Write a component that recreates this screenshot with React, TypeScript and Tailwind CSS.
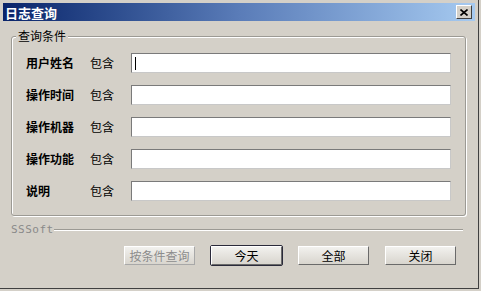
const rows = ["用户姓名", "操作时间", "操作机器", "操作功能", "说明"];

const font = { fontFamily: '"SimSun", "Noto Sans CJK SC", sans-serif' };

function Btn({ label, primary, disabled }: { label: string; primary?: boolean; disabled?: boolean }) {
  return (
    <div className={primary ? "border border-[#2a2a3a] rounded-[2px]" : "border border-transparent"}>
      <div
        className={
          "w-[71px] h-[19px] flex items-center justify-center text-[12px] border border-t-white border-l-white border-b-[#6a6a6a] border-r-[#6a6a6a] bg-gradient-to-b from-[#f2f1ee] to-[#d8d5ce] " +
          (disabled ? "text-[#8c8c8c] from-[#dcd9d2] to-[#d4d0c8] border-b-[#a8a8a8] border-r-[#a8a8a8]" : "text-black")
        }
      >
        {label}
      </div>
    </div>
  );
}

export default function App() {
  return (
    <div className="w-[481px] h-[291px] bg-[#d4d0c8] text-black" style={font}>
      <div className="w-[479px] h-[289px] flex flex-col border-r border-b border-[#404040] px-[3px] pt-[3px]">
        {/* Title bar */}
        <div className="h-[18px] flex items-center justify-between bg-gradient-to-r from-[#0a246a] via-[#5a7cb8] to-[#a6caf0] pl-[2px] pr-[3px]">
          <span className="text-white font-bold text-[13px] leading-none">日志查询</span>
          <div className="w-[16px] h-[14px] bg-[#d4d0c8] border border-t-white border-l-white border-b-[#404040] border-r-[#404040] flex items-center justify-center">
            <svg width="8" height="7" viewBox="0 0 8 7">
              <path d="M0.5 0.5 L7.5 6.5 M7.5 0.5 L0.5 6.5" stroke="#000" strokeWidth="1.6" />
            </svg>
          </div>
        </div>

        {/* Query criteria group */}
        <div className="mt-[15px] ml-[8px] mr-[9px] relative border border-[#9c9a94] rounded-[3px] shadow-[inset_1px_1px_0_#ffffff,1px_1px_0_#ffffff] h-[180px]">
          <span className="absolute -top-[8px] left-[4px] px-[2px] bg-[#d4d0c8] text-[12px] leading-[14px]">查询条件</span>
          <div className="flex flex-col gap-[12px] pt-[16px] pl-[14px] pr-[14px]">
            {rows.map((r, i) => (
              <div key={r} className="flex items-center h-[20px]">
                <span className="w-[64px] font-bold text-[12px]">{r}</span>
                <span className="w-[41px] text-[12px]">包含</span>
                <div className="flex-1 h-[20px] bg-white border border-t-[#7a7a7a] border-l-[#7a7a7a] border-b-[#c8c8c8] border-r-[#c8c8c8] flex items-center pl-[3px]">
                  {i === 0 && <div className="w-px h-[13px] bg-black" />}
                </div>
              </div>
            ))}
          </div>
        </div>

        {/* SSSoft separator */}
        <div className="mt-[8px] ml-[8px] mr-[12px] flex items-center">
          <span className="text-[11px] text-[#8a8a8a] leading-none tracking-[0.5px]" style={{ fontFamily: '"DejaVu Sans Mono", monospace' }}>
            SSSoft
          </span>
          <div className="flex-1 h-[2px] border-t border-[#9c9a94] border-b border-b-white" />
        </div>

        {/* Buttons */}
        <div className="mt-[10px] flex items-center justify-end gap-[14px] pr-[18px]">
          <Btn label="按条件查询" disabled />
          <Btn label="今天" primary />
          <Btn label="全部" />
          <Btn label="关闭" />
        </div>
      </div>
    </div>
  );
}
